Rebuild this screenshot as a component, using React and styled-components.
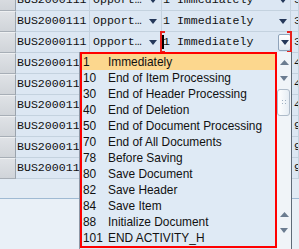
import React from 'react';
import styled, { createGlobalStyle } from 'styled-components';

const GlobalStyle = createGlobalStyle`
  html, body {
    margin: 0;
    padding: 0;
    background: #e9f0f7;
  }
  body {
    width: 299px;
    height: 249px;
    overflow: hidden;
  }
`;

const rows = ['3', '3', '3', '4', '4', '4', '9', '9', '9'];

const events = [
  ['1', 'Immediately'],
  ['10', 'End of Item Processing'],
  ['30', 'End of Header Processing'],
  ['40', 'End of Deletion'],
  ['50', 'End of Document Processing'],
  ['70', 'End of All Documents'],
  ['78', 'Before Saving'],
  ['80', 'Save Document'],
  ['82', 'Save Header'],
  ['84', 'Save Item'],
  ['88', 'Initialize Document'],
  ['101', 'END ACTIVITY_H'],
];

const Arrow = ({ color = '#25385a' }) => (
  <svg width="8" height="5" viewBox="0 0 8 5">
    <polygon points="0,0 8,0 4,5" fill={color} />
  </svg>
);

const UpArrow = ({ color = '#6b7c90' }) => (
  <svg width="9" height="5" viewBox="0 0 9 5">
    <polygon points="0,5 9,5 4.5,0" fill={color} />
  </svg>
);

export default function App() {
  return (
    <>
      <GlobalStyle />
      <Page>
        <Table>
          {rows.map((v, i) => (
            <Row key={i}>
              <RowHead />
              <Cell pad={1}>BUS2000111</Cell>
              <Cell pad={3} padRight={4}>
                <span>Opport…</span>
                <Arrow />
              </Cell>
              {i === 2 ? (
                <FocusCell>
                  <Caret />
                  <span>1 Immediately</span>
                  <DropButton>
                    <Arrow />
                  </DropButton>
                </FocusCell>
              ) : (
                <Cell pad={1} padRight={3}>
                  <span>1 Immediately</span>
                  <Arrow />
                </Cell>
              )}
              <Cell pad={3}>{v}</Cell>
            </Row>
          ))}
        </Table>
        <Footer />

        <Dropdown>
          <List>
            {events.map(([num, label], i) => (
              <Item key={num} selected={i === 0}>
                <Num>{num}</Num>
                <span>{label}</span>
              </Item>
            ))}
          </List>
          <Scroll>
            <ScrollBtn><UpArrow /></ScrollBtn>
            <ScrollBtn><Arrow color="#6b7c90" /></ScrollBtn>
            <Thumb>
              <Grip />
            </Thumb>
            <Spacer />
            <ScrollBtn><UpArrow /></ScrollBtn>
            <ScrollBtn><Arrow color="#6b7c90" /></ScrollBtn>
            <BottomGap />
          </Scroll>
        </Dropdown>
      </Page>
    </>
  );
}

const Page = styled.div`
  position: relative;
  width: 299px;
  height: 249px;
  overflow: hidden;
  background: #e9f0f7;
`;

const Table = styled.div`
  margin-top: -10px;
  display: flex;
  flex-direction: column;
`;

const Row = styled.div`
  display: grid;
  grid-template-columns: 16px 74px 72px 129px 1fr;
  height: 21px;
  box-sizing: border-box;
  border-bottom: 1px solid #c4d2df;
  background: #dce7f3;
`;

const RowHead = styled.div`
  box-sizing: border-box;
  border-right: 1px solid #9aa3ad;
  border-top: 1px solid #eef0f2;
  background: linear-gradient(#dfe2e6, #d0d4d9);
  margin-bottom: -1px;
  border-bottom: 1px solid #a7aeb6;
`;

const Cell = styled.div`
  display: flex;
  align-items: center;
  justify-content: space-between;
  box-sizing: border-box;
  border-right: 1px solid #c4d2df;
  padding-left: ${p => p.pad || 0}px;
  padding-right: ${p => p.padRight || 0}px;
  font-family: "Liberation Mono", "Courier New", monospace;
  font-size: 11.6px;
  line-height: 20px;
  color: #111;
  white-space: nowrap;
  overflow: hidden;
`;

const FocusCell = styled(Cell)`
  position: relative;
  overflow: visible;
  padding-left: 1px;
  justify-content: flex-start;

  &::before,
  &::after {
    content: '';
    position: absolute;
    top: -1px;
    bottom: -1px;
    width: 5px;
    border: 2px solid #e8201c;
    box-sizing: border-box;
    z-index: 2;
  }
  &::before {
    left: -2px;
    border-right: none;
  }
  &::after {
    right: -2px;
    border-left: none;
  }
`;

const Caret = styled.span`
  position: absolute;
  left: 0;
  top: 3px;
  width: 2px;
  height: 14px;
  background: #000;
`;

const DropButton = styled.span`
  margin-left: auto;
  margin-right: -1px;
  width: 13px;
  height: 17px;
  box-sizing: border-box;
  display: flex;
  align-items: center;
  justify-content: center;
  border: 1px solid #8fa3ba;
  border-radius: 2px;
  background: linear-gradient(#ffffff, #dfe8f2);
`;

const Footer = styled.div`
  height: 19px;
  border-bottom: 1px solid #9fbad3;
  background: #e2ebf4;
`;

const Dropdown = styled.div`
  position: absolute;
  left: 79px;
  top: 52px;
  width: 213px;
  height: 200px;
  display: flex;
  box-sizing: border-box;
  border-left: 1px solid #8c98a6;
  border-right: 1px solid #5f6b78;
  background: #dfeaf5;
  z-index: 3;
`;

const List = styled.div`
  width: 197px;
  height: 196px;
  box-sizing: border-box;
  border: 2px solid #f00;
  display: flex;
  flex-direction: column;
`;

const Item = styled.div`
  display: flex;
  align-items: center;
  height: 16px;
  flex: none;
  padding-left: 1px;
  background: ${p => (p.selected ? '#fcd78e' : 'transparent')};
  font-family: "Liberation Sans", Arial, sans-serif;
  font-size: 11.9px;
  color: #111;
  white-space: nowrap;
`;

const Num = styled.span`
  width: 25px;
  flex: none;
`;

const Scroll = styled.div`
  width: 14px;
  display: flex;
  flex-direction: column;
  padding-top: 2px;
  background: #f0f4f8;
`;

const ScrollBtn = styled.div`
  height: 16px;
  flex: none;
  display: flex;
  align-items: center;
  justify-content: center;
`;

const Thumb = styled.div`
  margin: 3px 1px 0 0;
  height: 27px;
  flex: none;
  box-sizing: border-box;
  border: 1px solid #aebbc9;
  border-radius: 3px;
  background: linear-gradient(90deg, #ffffff, #e6edf4);
  display: flex;
  align-items: center;
  justify-content: center;
`;

const Grip = styled.div`
  width: 5px;
  height: 7px;
  background-image: radial-gradient(circle, #9fb0c2 0.8px, transparent 1px);
  background-size: 3px 3px;
`;

const Spacer = styled.div`
  flex: 1;
`;

const BottomGap = styled.div`
  height: 14px;
  flex: none;
`;
